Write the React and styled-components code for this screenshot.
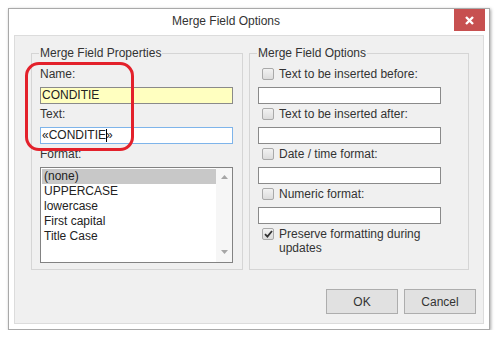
import React from 'react';
import styled, { createGlobalStyle } from 'styled-components';

const GlobalStyle = createGlobalStyle`
  * { box-sizing: border-box; }
  body {
    margin: 0;
    background: #fff;
    font-family: "Liberation Sans", Arial, sans-serif;
    font-size: 12px;
    color: #333;
  }
`;

const Page = styled.div`
  padding: 8px 0 0 8px;
`;

const Dialog = styled.div`
  width: 482px;
  height: 322px;
  border: 1px solid #a9a9a9;
  background: #fff;
  box-shadow: 1px 1px 3px rgba(0, 0, 0, 0.35);
  display: flex;
  flex-direction: column;
  padding: 0 5px 5px 5px;
`;

const TitleBar = styled.div`
  height: 26px;
  display: flex;
  margin-right: -1px;
`;

const Title = styled.div`
  flex: 1;
  text-align: center;
  line-height: 25px;
  padding-right: 16px;
  color: #333;
`;

const CloseButton = styled.div`
  width: 31px;
  height: 22px;
  background: #c75050;
  display: flex;
  align-items: center;
  justify-content: center;
`;

const Body = styled.div`
  position: relative;
  flex: 1;
  background: #f0f0f0;
  border: 1px solid #dcdcdc;
  padding: 10px 7px 9px 16px;
  display: flex;
  flex-direction: column;
`;

const Columns = styled.div`
  display: flex;
  gap: 6px;
`;

const Group = styled.fieldset`
  width: ${p => p.$w}px;
  height: 224px;
  margin: 0;
  padding: 7px 8px 0 8px;
  border: 1px solid #d5d5d5;
  display: flex;
  flex-direction: column;
`;

const Legend = styled.legend`
  padding: 0 1px;
  margin-left: -1px;
  line-height: 14px;
  color: #333;
`;

const Label = styled.div`
  line-height: 14px;
  height: 14px;
  margin-bottom: 6px;
`;

const TextBox = styled.div`
  width: ${p => p.$w}px;
  height: 17px;
  margin-bottom: 3px;
  border: 1px solid ${p => (p.$focus ? '#7eb4ea' : '#8a8a8a')};
  background: ${p => (p.$yellow ? '#ffffc0' : '#fff')};
  line-height: 15px;
  padding-left: 1px;
  color: #222;
  display: flex;
  white-space: nowrap;
`;

const Caret = styled.span`
  width: 1px;
  height: 13px;
  margin-top: 1px;
  margin-right: -1px;
  background: #000;
  position: relative;
`;

const ListBox = styled.div`
  width: 193px;
  height: 96px;
  border: 1px solid #828282;
  background: #fff;
  display: flex;
`;

const Options = styled.div`
  flex: 1;
  padding: 1px 0 0 1px;
`;

const Option = styled.div`
  line-height: 15px;
  height: 15px;
  padding-left: 2px;
  color: #222;
  background: ${p => (p.$selected ? '#c8c8c8' : 'transparent')};
`;

const ScrollTrack = styled.div`
  width: 16px;
  background: #f6f6f6;
  display: flex;
  flex-direction: column;
  justify-content: space-between;
  align-items: center;
  padding: 7px 0 8px;
`;

const CheckRow = styled.div`
  display: flex;
  align-items: flex-start;
  gap: 5px;
  padding-left: 4px;
  line-height: 14px;
  min-height: 14px;
  margin-bottom: 6px;
`;

const Box = styled.span`
  flex: none;
  width: 12px;
  height: 12px;
  margin-top: 1px;
  border: 1px solid #a9a9a9;
  border-radius: 2px;
  background: linear-gradient(#f2f2f2, #dcdcdc);
  display: flex;
  align-items: center;
  justify-content: center;
`;

const ButtonRow = styled.div`
  margin-top: auto;
  display: flex;
  justify-content: flex-end;
  gap: 6px;
`;

const Button = styled.div`
  width: 72px;
  height: 25px;
  border: 1px solid #adadad;
  background: #e1e1e1;
  color: #333;
  display: flex;
  align-items: center;
  justify-content: center;
`;

const Highlight = styled.div`
  position: absolute;
  left: 10px;
  top: 26px;
  width: 109px;
  height: 89px;
  border: 3px solid #e3212b;
  border-radius: 14px;
  pointer-events: none;
`;

const Arrow = ({ down }) => (
  <svg width="7" height="4" viewBox="0 0 7 4">
    <path d={down ? 'M0 0H7L3.5 4Z' : 'M0 4H7L3.5 0Z'} fill="#a6a6a6" />
  </svg>
);

const Check = ({ checked, children }) => (
  <CheckRow>
    <Box>
      {checked && (
        <svg width="9" height="8" viewBox="0 0 9 8">
          <path d="M1 4.2L3.4 6.6L8 1" fill="none" stroke="#333" strokeWidth="1.8" />
        </svg>
      )}
    </Box>
    <span>{children}</span>
  </CheckRow>
);

const formats = ['(none)', 'UPPERCASE', 'lowercase', 'First capital', 'Title Case'];

export default function App() {
  return (
    <Page>
      <GlobalStyle />
      <Dialog>
        <TitleBar>
          <Title>Merge Field Options</Title>
          <CloseButton>
            <svg width="9" height="9" viewBox="0 0 9 9">
              <path d="M1 1L8 8M8 1L1 8" stroke="#fff" strokeWidth="2.4" />
            </svg>
          </CloseButton>
        </TitleBar>
        <Body>
          <Columns>
            <Group $w={212}>
              <Legend>Merge Field Properties</Legend>
              <Label>Name:</Label>
              <TextBox $w={193} $yellow>CONDITIE</TextBox>
              <Label>Text:</Label>
              <TextBox $w={193} $focus>
                «CONDITIE<Caret />»
              </TextBox>
              <Label>Format:</Label>
              <ListBox>
                <Options>
                  {formats.map((f, i) => (
                    <Option key={f} $selected={i === 0}>{f}</Option>
                  ))}
                </Options>
                <ScrollTrack>
                  <Arrow />
                  <Arrow down />
                </ScrollTrack>
              </ListBox>
            </Group>
            <Group $w={220}>
              <Legend>Merge Field Options</Legend>
              <Check>Text to be inserted before:</Check>
              <TextBox $w={183} />
              <Check>Text to be inserted after:</Check>
              <TextBox $w={183} />
              <Check>Date / time format:</Check>
              <TextBox $w={183} />
              <Check>Numeric format:</Check>
              <TextBox $w={183} />
              <Check checked>Preserve formatting during updates</Check>
            </Group>
          </Columns>
          <ButtonRow>
            <Button>OK</Button>
            <Button>Cancel</Button>
          </ButtonRow>
          <Highlight />
        </Body>
      </Dialog>
    </Page>
  );
}
